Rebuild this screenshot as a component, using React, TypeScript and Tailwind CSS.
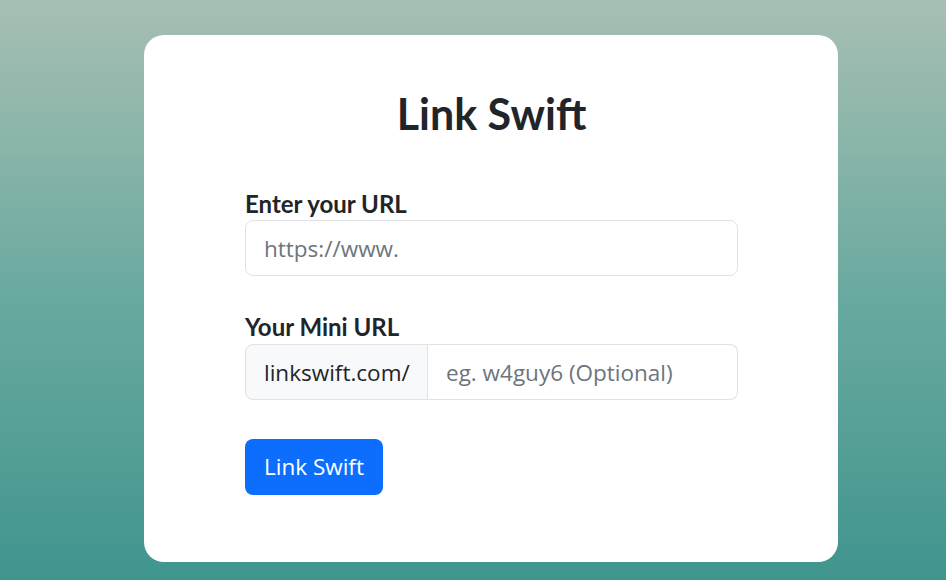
export default function App() {
  return (
    <div className="min-h-[580px] w-full bg-gradient-to-b from-[#a7bfb3] via-[#6aaaa0] to-[#3f958e] flex justify-center pl-[36px] pt-[35px] pb-[18px]">
      <div className="w-[694px] h-[527px] bg-white rounded-[20px] pl-[101px] pr-[100px] pt-[53px]">
        <h1 className="text-center text-[43px] font-bold text-[#212529] font-['Lato',sans-serif] leading-[1.2]">
          Link Swift
        </h1>

        <form className="mt-[49px]" onSubmit={(e) => e.preventDefault()}>
          <label className="block text-[24px] font-bold text-[#212529] font-['Lato',sans-serif] leading-[29px] mb-[2px]">
            Enter your URL
          </label>
          <input
            type="text"
            placeholder="https://www."
            className="w-full h-[56px] border border-[#dee2e6] rounded-[8px] px-[18px] pt-[2px] text-[22.5px] font-['Open_Sans',sans-serif] text-[#212529] placeholder:text-[#6c757d] outline-none"
          />

          <label className="block mt-[36px] text-[24px] font-bold text-[#212529] font-['Lato',sans-serif] leading-[29px] mb-[3px]">
            Your Mini URL
          </label>
          <div className="flex h-[56px]">
            <span className="flex items-center w-[183px] shrink-0 bg-[#f8f9fa] border border-[#dee2e6] rounded-l-[8px] px-[18px] pt-[2px] text-[22.5px] font-['Open_Sans',sans-serif] text-[#212529]">
              linkswift.com/
            </span>
            <input
              type="text"
              placeholder="eg. w4guy6 (Optional)"
              className="flex-1 min-w-0 border border-l-0 border-[#dee2e6] rounded-r-[8px] px-[18px] pt-[2px] text-[22.5px] font-['Open_Sans',sans-serif] text-[#212529] placeholder:text-[#6c757d] outline-none"
            />
          </div>

          <button
            type="submit"
            className="mt-[39px] h-[56px] w-[138px] bg-[#0d6efd] text-white rounded-[8px] text-[22.5px] font-['Open_Sans',sans-serif]"
          >
            Link Swift
          </button>
        </form>
      </div>
    </div>
  );
}
